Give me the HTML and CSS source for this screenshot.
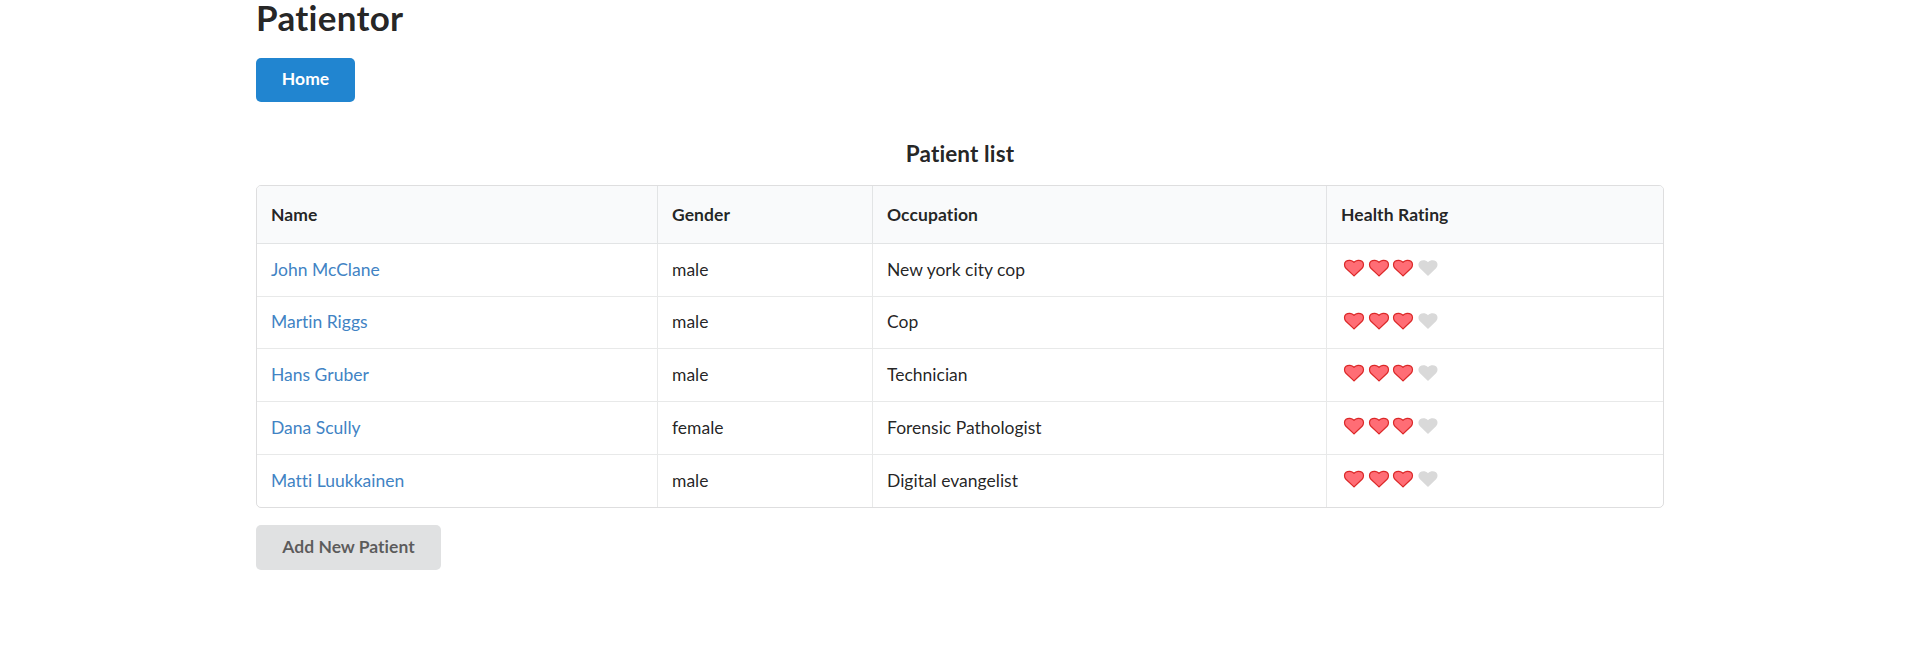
FILE: index.html
```html
<!DOCTYPE html>
<html lang="en">
<head>
<meta charset="utf-8">
<title>Patientor</title>
<link rel="stylesheet" href="styles.css">
</head>
<body>
<svg width="0" height="0" class="defs"><defs>
<path id="heart" d="M12 19.5 L3.2 11.2 C1 8.8 1.2 5.2 3.3 3.6 C5.6 1.9 9.6 2.1 12 4.6 C14.4 2.1 18.4 1.9 20.7 3.6 C22.8 5.2 23 8.8 20.8 11.2 Z"/>
</defs></svg>
<main class="container">
<h1 class="title">Patientor</h1>
<a class="button primary">Home</a>
<h3 class="subtitle">Patient list</h3>
<table class="table">
<colgroup><col class="c-name"><col class="c-gender"><col class="c-job"><col class="c-rating"></colgroup>
<thead><tr><th>Name</th><th>Gender</th><th>Occupation</th><th>Health Rating</th></tr></thead>
<tbody id="rows"></tbody>
</table>
<button class="button secondary">Add New Patient</button>
</main>
<script src="app.js"></script>
</body>
</html>
```
FILE: styles.css
```css
* { box-sizing: border-box; }
body { margin: 0; background: #fff; color: rgba(0,0,0,.87); font-family: Lato, "Liberation Sans", sans-serif; font-size: 17.5px; line-height: 25px; font-variant-ligatures: none; }
.defs { display: block; }
.container { width: 1408px; margin: 0 auto; }
.title { margin: 0 0 23px; font-size: 35px; line-height: 35px; font-weight: 700; letter-spacing: .3px; }
.button { display: block; border: 0; border-radius: 5px; font-family: inherit; font-variant-ligatures: none; font-size: 17.5px; font-weight: 700; line-height: 18px; text-align: center; padding: 12px 0 14px; }
.primary { width: 99px; height: 44px; background: #2185d0; color: #fff; }
.subtitle { margin: 37px 0 17px; font-size: 22.5px; line-height: 29px; font-weight: 700; text-align: center; letter-spacing: .12px; }
.table { width: 1408px; table-layout: fixed; border: 1px solid rgba(34,36,38,.15); border-radius: 5px; border-collapse: separate; border-spacing: 0; }
.c-name { width: 400px; }
.c-gender { width: 215px; }
.c-job { width: 454px; }
.table th { height: 58px; padding: 0 14px; text-align: left; font-weight: 700; letter-spacing: .08px; background: #f9fafb; border-bottom: 1px solid rgba(34,36,38,.1); border-left: 1px solid rgba(34,36,38,.1); }
.table td { height: 53px; padding: 0 14px 2px; border-top: 1px solid rgba(34,36,38,.1); border-left: 1px solid rgba(34,36,38,.1); }
.table th:first-child, .table td:first-child { border-left: 0; }
.table th:first-child { border-top-left-radius: 4px; }
.table th:last-child { border-top-right-radius: 4px; }
.table tbody tr:nth-child(-n+2) td { height: 52px; }
.table tbody tr:first-child td { border-top: 0; }
.link { color: #4183c4; }
.rating { display: flex; gap: 2.5px; margin-left: 2px; }
.heart { width: 22px; height: 22px; overflow: visible; fill: #d9d9d9; }
.heart.on { fill: #ff6d75; stroke: #db2828; stroke-width: 1.3; }
.secondary { width: 185px; height: 45px; margin-top: 17px; background: #e0e1e2; color: rgba(0,0,0,.6); padding: 13px 0 14px; }
```
FILE: app.js
```js
const patients = [
  ["John McClane", "male", "New york city cop"],
  ["Martin Riggs", "male", "Cop"],
  ["Hans Gruber", "male", "Technician"],
  ["Dana Scully", "female", "Forensic Pathologist"],
  ["Matti Luukkainen", "male", "Digital evangelist"]
];
const on = '<svg class="heart on" viewBox="0 0 24 24"><use href="#heart"/></svg>';
const off = '<svg class="heart" viewBox="0 0 24 24"><use href="#heart"/></svg>';
document.getElementById("rows").innerHTML = patients.map(([name, gender, job]) =>
  `<tr><td><a class="link">${name}</a></td><td>${gender}</td><td>${job}</td><td><div class="rating">${on.repeat(3)}${off}</div></td></tr>`
).join("");
```
